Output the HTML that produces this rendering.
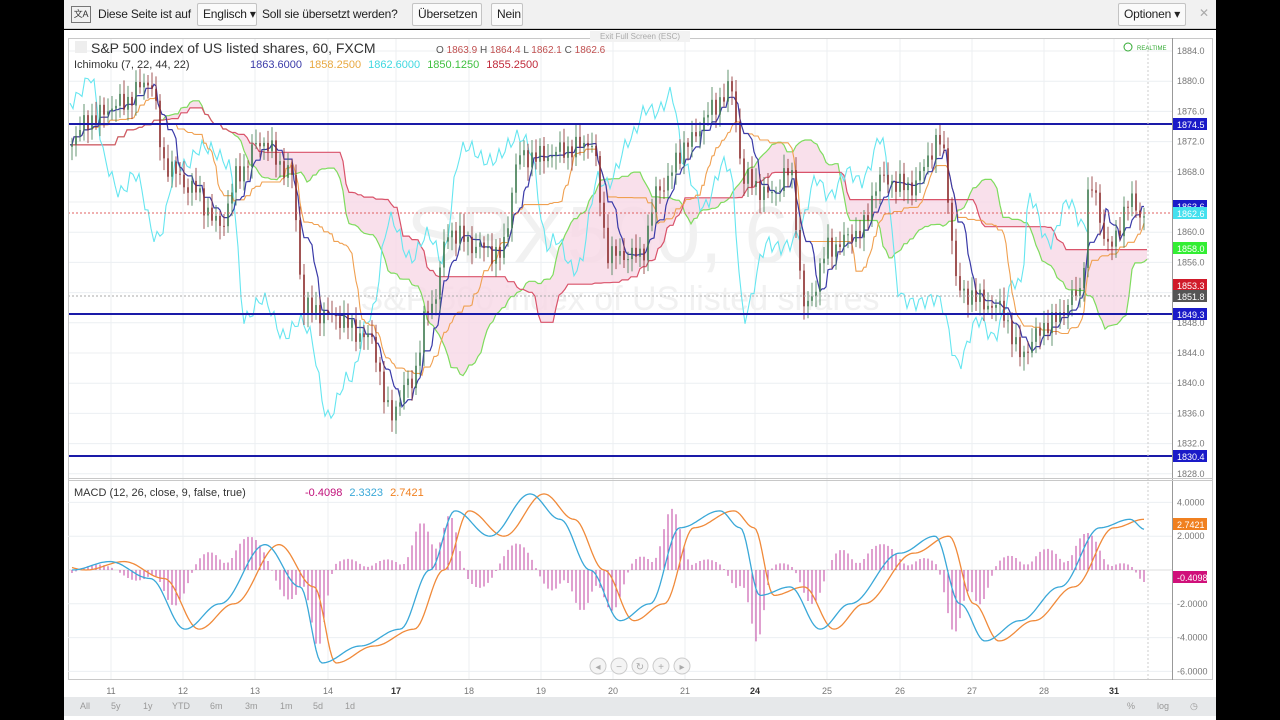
<!DOCTYPE html>
<html><head><meta charset="utf-8"><style>
*{margin:0;padding:0;box-sizing:border-box}
body{width:1280px;height:720px;background:#000;overflow:hidden;font-family:"Liberation Sans",sans-serif;position:relative}
#top{position:absolute;left:64px;top:0;width:1152px;height:29px;background:#f1f1f1;border-bottom:1px solid #cfcfcf;font-size:12px;color:#222;letter-spacing:-0.2px}
.btn{position:absolute;top:3px;height:23px;border:1px solid #c4c4c4;border-radius:2px;background:#fafafa;line-height:21px;padding:0 5px;white-space:nowrap}
.t{position:absolute;top:7px;white-space:nowrap}
#main{position:absolute;left:64px;top:30px;width:1152px;height:690px;background:#fff}
#bot{position:absolute;left:64px;top:697px;width:1152px;height:19px;background:#e6e8ea;font-size:9px;color:#999}
#bot span{position:absolute;top:4px}
svg text{font-family:"Liberation Sans",sans-serif}
</style></head><body>
<div id="top">
<div style="position:absolute;left:7px;top:6px;width:20px;height:17px;border:1px solid #777;font-size:9px;line-height:15px;text-align:center;color:#333">文A</div>
<span class="t" style="left:34px">Diese Seite ist auf</span>
<div class="btn" style="left:133px;width:60px">Englisch ▾</div>
<span class="t" style="left:198px">Soll sie übersetzt werden?</span>
<div class="btn" style="left:348px;width:70px">Übersetzen</div>
<div class="btn" style="left:427px;width:32px">Nein</div>
<div class="btn" style="left:1054px;width:68px">Optionen ▾</div>
<span style="position:absolute;left:1135px;top:6px;color:#aaa">✕</span>
</div>
<div id="main"></div>
<svg id="s" width="1280" height="720" style="position:absolute;left:0;top:0"></svg>
<div id="bot">
<span style="left:16px">All</span><span style="left:47px">5y</span><span style="left:79px">1y</span><span style="left:108px">YTD</span><span style="left:146px">6m</span><span style="left:181px">3m</span><span style="left:216px">1m</span><span style="left:249px">5d</span><span style="left:281px">1d</span>
<span style="left:1063px">%</span><span style="left:1093px">log</span><span style="left:1126px">◷</span>
</div>
<script>
var S=document.getElementById('s'),h='';
function Y(p){return 51+(1884-p)*7.55}
function MY(v){return 570-v*16.9}
function interp(pts,x){for(var i=0;i<pts.length-1;i++){if(x<=pts[i+1][0]){var a=pts[i],b=pts[i+1],t=(x-a[0])/(b[0]-a[0]);t=(1-Math.cos(t*Math.PI))/2;return a[1]+(b[1]-a[1])*t}}return pts[pts.length-1][1]}
var P=[[70,1872],[90,1875],[120,1877],[150,1880],[165,1869],[190,1866],[220,1861],[240,1868],[260,1872],[290,1868],[305,1850],[330,1849],[370,1846],[390,1836],[410,1840],[430,1850],[450,1860],[480,1858],[500,1857],[520,1870],[540,1870],[570,1871],[590,1872],[610,1857],[640,1857],[660,1866],[690,1872],[710,1876],[730,1879],[745,1867],[770,1865],[790,1868],[805,1850],[830,1858],[860,1860],[880,1867],[910,1866],[940,1872],[960,1852],[1000,1850],[1020,1844],[1050,1848],[1080,1852],[1090,1866],[1110,1858],[1130,1864],[1145,1862]];
var c=[];for(var x=0;x<1300;x++){var v=interp(P,Math.max(70,Math.min(1145,x)));v+=Math.sin(x*0.7)*1.0+Math.sin(x*1.9)*0.6;c[x]=v}
function mid(x,n){var mx=-1e9,mn=1e9;for(var k=x-n;k<=x;k++){var v=c[Math.max(70,k)];if(v>mx)mx=v;if(v<mn)mn=v}return (mx+mn)/2}
h+='<g stroke="#eceff2" stroke-width="1">';
[111,183,255,328,396,469,541,613,685,755,827,900,972,1044,1114].forEach(function(x){h+='<line x1="'+x+'" y1="38" x2="'+x+'" y2="680"/>'});
for(var p=1884;p>=1828;p-=4)h+='<line x1="68" y1="'+Y(p)+'" x2="1172" y2="'+Y(p)+'"/>';
h+='</g>';
h+='<text x="620" y="262" font-size="80" fill="#f1f1f1" text-anchor="middle">SPX500, 60</text><text x="620" y="310" font-size="34" fill="#f1f1f1" text-anchor="middle">S&amp;P 500 index of US listed shares</text>';
var A=[],B=[];for(x=70;x<1150;x+=3){A.push([x,Y((mid(x-44,42)+mid(x-44,105))/2)]);B.push([x,Y(mid(x-44,200))])}
var poly=A.map(function(p){return p.join(',')}).join(' ')+' '+B.slice().reverse().map(function(p){return p.join(',')}).join(' ');
h+='<polygon points="'+poly+'" fill="#f8d8e6" opacity="0.8"/>';
function pl(arr,col,w){return '<polyline fill="none" stroke="'+col+'" stroke-width="'+(w||1)+'" points="'+arr.map(function(p){return p[0].toFixed(1)+','+p[1].toFixed(1)}).join(' ')+'"/>'}
h+=pl(A,'#7fdc5e',1.2)+pl(B,'#d9536a',1.2);
var C=[];for(x=70;x<1090;x+=3)C.push([x,Y(c[x+60]+Math.sin(x*0.15)*1.5)]);h+=pl(C,'#66e6f0',1.1);
var K=[],T=[];for(x=70;x<1146;x+=2){K.push([x,Y(mid(x,60))]);T.push([x,Y(mid(x,20))])}
h+=pl(K,'#f0a050',1.1)+pl(T,'#3a3aa8',1.2);
for(x=72;x<1146;x+=4){var o=c[x-4],cl=c[x],hi=Math.max(o,cl)+0.6+Math.abs(Math.sin(x))*1.2,lo=Math.min(o,cl)-0.6-Math.abs(Math.cos(x))*1.2,col=cl>=o?'#3d7a4e':'#8a2a2a';
h+='<line x1="'+x+'" y1="'+Y(hi)+'" x2="'+x+'" y2="'+Y(lo)+'" stroke="'+col+'" stroke-width="0.8"/><rect x="'+(x-0.8)+'" y="'+Y(Math.max(o,cl))+'" width="1.6" height="'+Math.max(1,Math.abs(o-cl)*7.55)+'" fill="'+col+'"/>'}
h+='<line x1="68" y1="213" x2="1172" y2="213" stroke="#e06060" stroke-dasharray="2,2"/><line x1="68" y1="296" x2="1172" y2="296" stroke="#aaa" stroke-dasharray="2,2"/>';
[124,314,456].forEach(function(y){h+='<line x1="68" y1="'+y+'" x2="1172" y2="'+y+'" stroke="#1a1aa8" stroke-width="2"/>'});
h+='<line x1="1148" y1="38" x2="1148" y2="680" stroke="#ccc" stroke-dasharray="2,2"/>';
h+='<rect x="68.5" y="38.5" width="1144" height="641" fill="none" stroke="#c8c8c8"/><line x1="1172.5" y1="38" x2="1172.5" y2="680" stroke="#999"/><line x1="68" y1="480.5" x2="1212" y2="480.5" stroke="#c8c8c8"/><line x1="68" y1="478.5" x2="1212" y2="478.5" stroke="#c8c8c8"/>';
for(p=1884;p>=1828;p-=4){if(p==1864||p==1852)continue;h+='<text x="1177" y="'+(Y(p)+3)+'" font-size="9" fill="#777">'+p+'.0</text>'}
function lab(y,t,bg,fg){h+='<rect x="1173" y="'+(y-6)+'" width="34" height="12" fill="'+bg+'"/><text x="1177" y="'+(y+4)+'" font-size="9" fill="'+(fg||'#fff')+'">'+t+'</text>'}
lab(124,'1874.5','#1a1ac8');lab(206,'1863.6','#1a1ac8');lab(213,'1862.6','#44e0ee');lab(248,'1858.0','#33ee33');lab(285,'1853.3','#d01a2a');lab(296,'1851.8','#555');lab(314,'1849.3','#1a1ac8');lab(456,'1830.4','#1a1ac8');
h+='<line x1="68" y1="570" x2="1172" y2="570" stroke="#ddd"/>';
[4,2,-2,-4,-6].forEach(function(v){h+='<line x1="68" y1="'+MY(v)+'" x2="1172" y2="'+MY(v)+'" stroke="#eceff2"/><text x="1177" y="'+(MY(v)+3)+'" font-size="9" fill="#777">'+(v>0?' ':'')+v.toFixed(4)+'</text>'});
var M=[[72,0],[110,0.5],[150,-0.5],[185,-3.5],[220,-2],[265,1.5],[300,-1],[322,-5.5],[360,-4.5],[400,-3.5],[430,0],[455,3.5],[490,2],[530,4.5],[560,3],[590,0],[620,-3],[650,-2],[680,2.5],[720,3.5],[740,2.5],[760,-1.5],[790,-1],[820,-3.5],[850,-2],[900,1],[935,2],[960,-2],[985,-4.2],[1020,-3],[1060,-1],[1100,2.5],[1130,3],[1145,2.4]];
var m=[],sg=[],ml=[],sl=[];for(x=72;x<1146;x+=2){m[x]=interp(M,x);sg[x]=interp(M,x-14);ml.push([x,MY(m[x])]);sl.push([x,MY(sg[x])])}
for(x=72;x<1146;x+=4){var d=(m[x]-sg[x])*1.2;h+='<line x1="'+x+'" y1="570" x2="'+x+'" y2="'+MY(d)+'" stroke="#c040a0" stroke-width="1"/>'}
h+=pl(sl,'#f08a3a',1.3)+pl(ml,'#3aa8d8',1.3);
lab(524,'2.7421','#f08020');lab(577,'-0.4098','#d0107a');
[['11',111],['12',183],['13',255],['14',328],['17',396],['18',469],['19',541],['20',613],['21',685],['24',755],['25',827],['26',900],['27',972],['28',1044],['31',1114]].forEach(function(d){var b=(d[0]=='17'||d[0]=='24'||d[0]=='31');h+='<text x="'+d[1]+'" y="694" font-size="9" fill="'+(b?'#333':'#777')+'" text-anchor="middle" font-weight="'+(b?'bold':'normal')+'">'+d[0]+'</text>'});
[598,619,640,661,682].forEach(function(x,i){h+='<circle cx="'+x+'" cy="666" r="8" fill="#f4f4f4" stroke="#ccc"/><text x="'+x+'" y="670" font-size="10" fill="#aaa" text-anchor="middle">'+['◂','−','↻','+','▸'][i]+'</text>'});
h+='<rect x="75" y="41" width="12" height="12" fill="#eee"/><text x="91" y="53" font-size="14" fill="#333">S&amp;P 500 index of US listed shares, 60, FXCM</text>';
h+='<text x="436" y="53" font-size="10"><tspan fill="#555">O </tspan><tspan fill="#c05050">1863.9 </tspan><tspan fill="#555">H </tspan><tspan fill="#c05050">1864.4 </tspan><tspan fill="#555">L </tspan><tspan fill="#c05050">1862.1 </tspan><tspan fill="#555">C </tspan><tspan fill="#c05050">1862.6</tspan></text>';
h+='<text x="74" y="68" font-size="11" fill="#333">Ichimoku (7, 22, 44, 22)</text><text x="250" y="68" font-size="11"><tspan fill="#3a3aa8">1863.6000 </tspan><tspan fill="#e8a840" dx="4">1858.2500 </tspan><tspan fill="#40d8e0" dx="4">1862.6000 </tspan><tspan fill="#40c040" dx="4">1850.1250 </tspan><tspan fill="#c02a3a" dx="4">1855.2500</tspan></text>';
h+='<text x="74" y="496" font-size="11" fill="#333">MACD (12, 26, close, 9, false, true)</text><text x="305" y="496" font-size="11"><tspan fill="#c0107a">-0.4098 </tspan><tspan fill="#3aa8d8" dx="4">2.3323 </tspan><tspan fill="#f08020" dx="4">2.7421</tspan></text>';
h+='<rect x="590" y="31" width="100" height="11" fill="#f2f2f2"/><text x="640" y="39" font-size="8" fill="#aaa" text-anchor="middle">Exit Full Screen (ESC)</text>';
h+='<circle cx="1128" cy="47" r="4" fill="none" stroke="#3a3"/><text x="1137" y="50" font-size="6" fill="#3a3">REALTIME</text>';
S.innerHTML=h;
</script>
</body></html>
